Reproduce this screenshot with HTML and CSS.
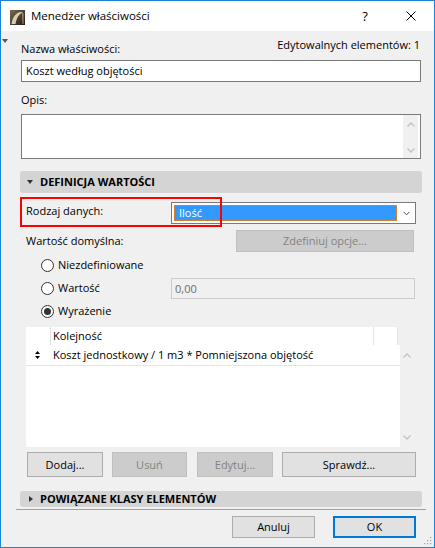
FILE: index.html
```html
<!DOCTYPE html>
<html lang="pl">
<head>
<meta charset="utf-8">
<title>Menedżer właściwości</title>
<link rel="stylesheet" href="styles.css">
</head>
<body>
<div class="window">
  <div class="titlebar">
    <svg class="appicon" viewBox="0 0 15 15">
      <defs>
        <linearGradient id="ag" x1="0" y1="0" x2="1" y2="1">
          <stop offset="0" stop-color="#7a6850"/>
          <stop offset="1" stop-color="#241d16"/>
        </linearGradient>
      </defs>
      <rect width="15" height="15" fill="url(#ag)"/>
      <path d="M1.5 14 C2.5 7 6 2.5 11 2 L13 2.5 C9 4 6.5 8 5.5 14 Z" fill="#d9cbb0"/>
      <path d="M12 3 L13.5 3.5 L13.5 14 L12.5 14 Z" fill="#a89274"/>
    </svg>
    <span class="title">Menedżer właściwości</span>
    <span class="tbtn help">?</span>
    <span class="tbtn close">
      <svg viewBox="0 0 10 10" width="10" height="10"><path d="M0.5 0.5 L9.5 9.5 M9.5 0.5 L0.5 9.5" stroke="#000" stroke-width="1"/></svg>
    </span>
  </div>

  <div class="content">
    <span class="pin-arrow"></span>

    <div class="toprow">
      <span class="lbl-name">Nazwa właściwości:</span>
      <span class="editable">Edytowalnych elementów: 1</span>
    </div>
    <div class="name-field">Koszt według objętości</div>

    <div class="opis">Opis:</div>
    <div class="textarea">
      <div class="vscroll">
        <svg class="chev" viewBox="0 0 8 5"><path d="M0.5 4.5 L4 1 L7.5 4.5" fill="none" stroke="#c2c2c2" stroke-width="1.3"/></svg>
        <svg class="chev" viewBox="0 0 8 5"><path d="M0.5 0.5 L4 4 L7.5 0.5" fill="none" stroke="#c2c2c2" stroke-width="1.3"/></svg>
      </div>
    </div>

    <div class="section sec-def">
      <span class="tri-down"></span>
      <span class="sec-title">DEFINICJA WARTOŚCI</span>
    </div>

    <div class="def">
      <div class="row row-type">
        <span class="lbl">Rodzaj danych:</span>
        <div class="select">
          <div class="select-value">Ilość</div>
          <svg class="select-chev" viewBox="0 0 8 5"><path d="M0.5 0.5 L4 4 L7.5 0.5" fill="none" stroke="#404040" stroke-width="1.1"/></svg>
        </div>
        <div class="redbox"></div>
      </div>

      <div class="row row-default">
        <span class="lbl">Wartość domyślna:</span>
        <div class="btn disabled btn-opts">Zdefiniuj opcje...</div>
      </div>

      <div class="radio-row r1">
        <span class="radio"></span><span class="rlbl">Niezdefiniowane</span>
      </div>
      <div class="radio-row r2">
        <span class="radio"></span><span class="rlbl">Wartość</span>
        <div class="value-field">0,00</div>
      </div>
      <div class="radio-row r3">
        <span class="radio checked"></span><span class="rlbl">Wyrażenie</span>
      </div>

      <div class="list">
        <div class="list-head">
          <div class="hcell hc1"></div>
          <div class="hcell hc2">Kolejność</div>
          <div class="hcell hc3"></div>
        </div>
        <div class="list-body">
          <div class="table">
            <div class="trow">
              <svg class="sort" viewBox="0 0 5 8"><path d="M2.5 0 L5 3 L0 3 Z M0 5 L5 5 L2.5 8 Z" fill="#000"/></svg>
              <span class="expr">Koszt jednostkowy / 1 m3 * Pomniejszona objętość</span>
            </div>
          </div>
          <div class="lscroll">
            <svg class="chev" viewBox="0 0 8 5"><path d="M0.5 4.5 L4 1 L7.5 4.5" fill="none" stroke="#c2c2c2" stroke-width="1.3"/></svg>
            <svg class="chev" viewBox="0 0 8 5"><path d="M0.5 0.5 L4 4 L7.5 0.5" fill="none" stroke="#c2c2c2" stroke-width="1.3"/></svg>
          </div>
        </div>
      </div>

      <div class="btnrow">
        <div class="btn b-add">Dodaj...</div>
        <div class="btn disabled b-del">Usuń</div>
        <div class="btn disabled b-edit">Edytuj...</div>
        <div class="btn b-check">Sprawdź...</div>
      </div>
    </div>

    <div class="section sec-cls">
      <span class="tri-right"></span>
      <span class="sec-title">POWIĄZANE KLASY ELEMENTÓW</span>
    </div>

    <div class="separator"></div>

    <div class="footer">
      <div class="btn b-cancel">Anuluj</div>
      <div class="btn b-ok">OK</div>
    </div>

    <svg class="grip" viewBox="0 0 8 8">
      <rect x="6" y="0" width="1.2" height="1.2" fill="#a0a0a0"/>
      <rect x="3" y="3" width="1.2" height="1.2" fill="#a0a0a0"/>
      <rect x="6" y="3" width="1.2" height="1.2" fill="#a0a0a0"/>
      <rect x="0" y="6" width="1.2" height="1.2" fill="#a0a0a0"/>
      <rect x="3" y="6" width="1.2" height="1.2" fill="#a0a0a0"/>
      <rect x="6" y="6" width="1.2" height="1.2" fill="#a0a0a0"/>
    </svg>
  </div>
</div>
</body>
</html>
```

FILE: styles.css
```css
* { box-sizing: border-box; }

body {
  margin: 0;
  font-family: "Open Sans", "Noto Sans", sans-serif;
  font-size: 11px;
  color: #000;
  background: #fff;
}

.window {
  width: 435px;
  height: 548px;
  border: 1px solid #1883d7;
  background: #f0f0f0;
  display: flex;
  flex-direction: column;
  overflow: hidden;
}

/* title bar */
.titlebar {
  flex: none;
  height: 30px;
  background: #fff;
  display: flex;
  align-items: center;
}
.appicon {
  width: 15px;
  height: 15px;
  margin-left: 9px;
  margin-top: 2px;
}
.title {
  margin-left: 6px;
  font-size: 11.5px;
  line-height: 16px;
}
.tbtn {
  width: 46px;
  height: 30px;
  display: flex;
  align-items: center;
  justify-content: center;
}
.help {
  margin-left: auto;
  font-size: 13px;
}
.close svg { display: block; }

/* content */
.content {
  flex: 1;
  position: relative;
  padding: 0 12px 0 19px;
}
.pin-arrow {
  position: absolute;
  left: 1px;
  top: 8px;
  width: 0;
  height: 0;
  border-left: 3px solid transparent;
  border-right: 3px solid transparent;
  border-top: 4px solid #555;
}

.toprow {
  display: flex;
  justify-content: space-between;
  height: 29px;
}
.lbl-name {
  margin-top: 10px;
  margin-left: 1px;
  line-height: 16px;
}
.editable {
  margin-top: 6px;
  margin-right: 2px;
  line-height: 16px;
}

.name-field {
  margin: 0 1px;
  height: 22px;
  border: 1px solid #7a7a7a;
  background: #fff;
  line-height: 20px;
  padding-left: 4px;
}

.opis {
  height: 32px;
  padding-top: 10px;
  line-height: 16px;
  margin-left: 1px;
}

.textarea {
  margin: 0 1px;
  height: 45px;
  border: 1px solid #7a7a7a;
  background: #fff;
  display: flex;
  justify-content: flex-end;
  padding: 0 2px 0 0;
}
.vscroll {
  width: 15px;
  background: #f0f0f0;
  display: flex;
  flex-direction: column;
  align-items: center;
  justify-content: space-between;
  padding: 7px 0 5px;
}
.chev {
  width: 8px;
  height: 5px;
  display: block;
}

/* section headers */
.section {
  display: flex;
  align-items: center;
  background: #d4d4d4;
  border-radius: 3px;
  font-weight: bold;
}
.sec-def {
  margin-top: 12px;
  height: 22px;
}
.sec-cls {
  margin-top: 14px;
  height: 16px;
}
.sec-title {
  line-height: 16px;
}
.tri-down {
  margin-left: 7px;
  margin-right: 7px;
  width: 0;
  height: 0;
  border-left: 3px solid transparent;
  border-right: 3px solid transparent;
  border-top: 4px solid #333;
}
.tri-right {
  margin-left: 9px;
  margin-right: 7px;
  width: 0;
  height: 0;
  border-top: 3px solid transparent;
  border-bottom: 3px solid transparent;
  border-left: 4px solid #333;
}

/* definition area */
.def {
  padding-left: 6px;
}
.row {
  display: flex;
  align-items: center;
  height: 22px;
}
.lbl {
  line-height: 16px;
}
.row-type {
  position: relative;
  margin-top: 9px;
}
.row-type .lbl {
  width: 145px;
  margin-top: -4px;
}
.select {
  width: 245px;
  height: 22px;
  border: 1px solid #7a7a7a;
  background: #fff;
  display: flex;
  align-items: center;
  padding: 2px;
}
.select-value {
  width: 223px;
  height: 16px;
  background: #3399ff;
  color: #fff;
  line-height: 16px;
  padding-left: 5px;
  outline: 1px dotted #d58a3c;
  outline-offset: -1px;
}
.select-chev {
  width: 7px;
  height: 5px;
  margin-left: 6px;
}
.redbox {
  position: absolute;
  left: -6px;
  top: -5px;
  width: 202px;
  height: 30px;
  border: 2px solid #f00;
}

.row-default {
  margin-top: 6px;
}
.btn {
  height: 22px;
  border: 1px solid #adadad;
  background: #e1e1e1;
  display: flex;
  align-items: center;
  justify-content: center;
  line-height: 16px;
}
.btn.disabled {
  background: #cccccc;
  border-color: #bfbfbf;
  color: #838383;
}
.btn-opts {
  margin-left: auto;
  margin-right: 8px;
  width: 178px;
}

.radio-row {
  display: flex;
  align-items: center;
  height: 22px;
  padding-left: 15px;
}
.r1 { margin-top: 2px; }
.r2, .r3 { margin-top: 1px; }
.radio {
  width: 13px;
  height: 13px;
  border: 1px solid #333;
  border-radius: 50%;
  background: #fff;
  display: flex;
  align-items: center;
  justify-content: center;
}
.radio.checked::after {
  content: "";
  width: 7px;
  height: 7px;
  border-radius: 50%;
  background: #333;
}
.rlbl {
  margin-left: 4px;
  line-height: 16px;
}
.value-field {
  margin-left: auto;
  margin-right: 7px;
  width: 244px;
  height: 21px;
  border: 1px solid #cccccc;
  background: #f0f0f0;
  color: #6d6d6d;
  line-height: 19px;
  padding-left: 3px;
}

/* list */
.list {
  margin-top: 5px;
  width: 388px;
  height: 120px;
  display: flex;
  flex-direction: column;
}
.list-head {
  display: flex;
  height: 18px;
  width: 372px;
  background: #fff;
}
.hcell {
  height: 18px;
  line-height: 18px;
}
.hc1 {
  width: 25px;
  border-right: 1px solid #e3e3e3;
}
.hc2 {
  width: 323px;
  padding-left: 2px;
  border-right: 1px solid #e3e3e3;
}
.hc3 {
  flex: 1;
  border-right: 1px solid #e3e3e3;
}
.list-body {
  flex: 1;
  display: flex;
}
.table {
  width: 374px;
  background: #fff;
}
.trow {
  height: 21px;
  border-bottom: 1px solid #e6e6e6;
  display: flex;
  align-items: center;
}
.sort {
  width: 5px;
  height: 8px;
  margin-left: 9px;
  margin-right: 13px;
}
.expr {
  line-height: 16px;
}
.lscroll {
  width: 14px;
  display: flex;
  flex-direction: column;
  align-items: center;
  justify-content: space-between;
  padding: 8px 0 7px;
}

/* buttons */
.btnrow {
  margin-top: 5px;
  display: flex;
  height: 25px;
}
.btnrow .btn { height: 25px; }
.b-add { margin-left: 1px; width: 76px; }
.b-del { margin-left: 9px; width: 75px; }
.b-edit { margin-left: 10px; width: 76px; }
.b-check { margin-left: 9px; width: 134px; }

.separator {
  margin-top: 2px;
  margin-left: -4px;
  width: 410px;
  height: 1px;
  background: #a0a0a0;
}

.footer {
  margin-top: 6px;
  display: flex;
  justify-content: flex-end;
  padding-right: 6px;
}
.b-cancel { width: 83px; }
.b-ok {
  width: 83px;
  margin-left: 18px;
  border: 2px solid #0078d7;
}

.grip {
  position: absolute;
  right: 2px;
  bottom: 2px;
  width: 8px;
  height: 8px;
}
```
